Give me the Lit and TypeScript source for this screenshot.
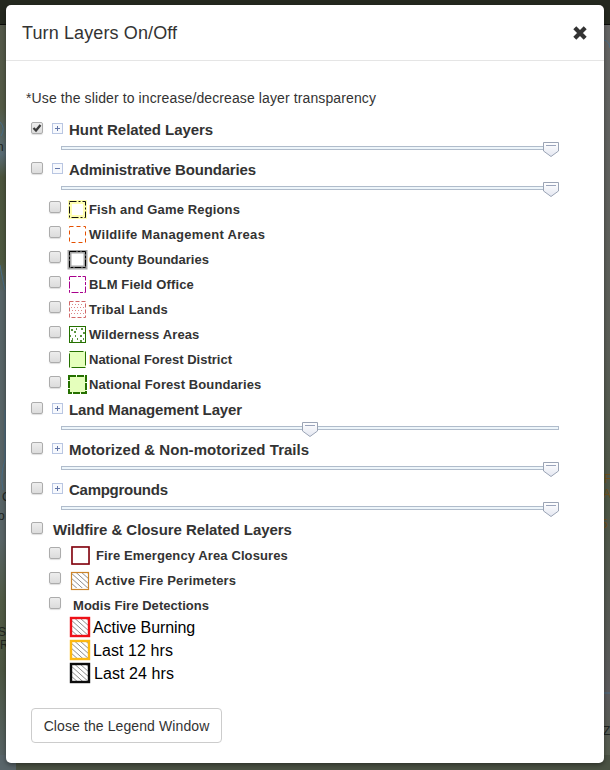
import { LitElement, html, css, svg, nothing } from "lit";
import { customElement, property } from "lit/decorators.js";
import { styleMap } from "lit/directives/style-map.js";

interface Item { label: string; art: string; gap?: number; ls?: number }
interface Group { label: string; checked?: boolean; open?: boolean; slider?: number; items?: Item[]; ls?: number }

const groups: Group[] = [
  { label: "Hunt Related Layers", checked: true, slider: 100, ls: -0.05 },
  {
    label: "Administrative Boundaries", open: true, slider: 100, ls: -0.16, items: [
      { label: "Fish and Game Regions", art: "fish", ls: 0.14 },
      { label: "Wildlife Management Areas", art: "wildlife", ls: 0.31 },
      { label: "County Boundaries", art: "county" },
      { label: "BLM Field Office", art: "blm", ls: 0.15 },
      { label: "Tribal Lands", art: "tribal", ls: 0.2 },
      { label: "Wilderness Areas", art: "wilderness", ls: 0.12 },
      { label: "National Forest District", art: "district" },
      { label: "National Forest Boundaries", art: "forest", ls: 0.1 },
    ],
  },
  { label: "Land Management Layer", slider: 50, ls: -0.14 },
  { label: "Motorized & Non-motorized Trails", slider: 100, ls: 0.03 },
  { label: "Campgrounds", slider: 100, ls: -0.27 },
];
const fire: Item[] = [
  { label: "Fire Emergency Area Closures", art: "closure", gap: 5, ls: 0.11 },
  { label: "Active Fire Perimeters", art: "perimeter", gap: 4, ls: 0.18 },
  { label: "Modis Fire Detections", art: "", ls: 0.05 },
];
const modis = [
  { label: "Active Burning", color: "#ee1118", gap: 2, ls: -0.07 },
  { label: "Last 12 hrs", color: "#fcb813", gap: 2, ls: 0.08 },
  { label: "Last 24 hrs", color: "#0c0c0c", gap: 3, ls: 0.08 },
];

const box = (stroke: string, dash: string, fill = "none", w = 1) =>
  svg`<rect x="2.5" y="1.5" width="16" height="16" fill=${fill} stroke=${stroke} stroke-width=${w} stroke-dasharray=${dash}/>`;
const hatch = (x: number, y: number, s: number) => svg`<svg x=${x} y=${y} width=${s} height=${s} viewBox="0 0 16 16">
  <path d="M-2-15L18 3M-2-10L18 8M-2-5L18 13M-2 0L18 18M-2 5L18 23M-2 10L18 28" stroke="#808080" stroke-width=".9"/></svg>`;

const art: Record<string, unknown> = {
  fish: svg`<rect x="1" y="0" width="19" height="19" fill="#ffffb0"/><rect x="5" y="4" width="11" height="11" fill="#fff"/>${box("#111", "7 2 2 2")}`,
  wildlife: box("#e55000", "4 3"),
  county: svg`<rect x="2.5" y="1.5" width="16" height="16" fill="#fff" stroke="#a5a5a5" stroke-width="4"/>${box("#000", "7 1 3 1")}`,
  blm: box("#a8008c", "7 1.5 3 1.5"),
  tribal: svg`${box("#d06868", "4 2")}<path d="M5 4.500H17M4 7.500H17M5 10.500H17M4 13.500H17" stroke="#d88" stroke-dasharray="1 2"/>`,
  wilderness: svg`${box("#257000", "none", "#fff")}<path d="M4 5h2M9 4h1M14 4h2M7 7h2M16 8h2M3 11h1M8 11h1M13 11h2M5 14h1M10 14h1M16 14h1M4 16h2M13 16h2" stroke="#257000" stroke-width="1.400"/>`,
  district: box("#257000", "14 2", "#e5ffbc"),
  forest: svg`<rect x="2" y="1" width="17" height="17" fill="#e5ffbc" stroke="#257000" stroke-width="2" stroke-dasharray="7 1"/>`,
  closure: svg`<rect x="4.5" y="1.500" width="18" height="18" fill="none" stroke="#f0d5d8" stroke-width="1"/><rect x="5" y="2" width="17" height="17" fill="#fff" stroke="#80000c" stroke-width="1.600"/>`,
  perimeter: svg`${hatch(5, 2, 16)}<rect x="4.5" y="2.500" width="17" height="17" fill="none" stroke="#cc852a" stroke-width="1.200"/>`,
};

@customElement("layer-checkbox")
export class LayerCheckbox extends LitElement {
  @property({ type: Boolean }) checked = false;
  static styles = css`
    :host { display: block; flex: none; width: 13px; height: 13px; }
    .box { box-sizing: border-box; width: 12px; height: 12px; border: 1px solid #acacac; border-radius: 2px;
      background: linear-gradient(#ededed, #dcdcdc); box-shadow: 0 1px 1px rgba(0, 0, 0, .13); }
    svg { display: block; margin: -1px 0 0 -1px; overflow: visible; }
  `;
  render() {
    return html`<div class="box">${this.checked ? html`<svg width="12" height="12"><path d="M2.500 6L5 8.500L9.500 3" fill="none" stroke="#3a3a3a" stroke-width="2.300"/></svg>` : nothing}</div>`;
  }
}

@customElement("layer-slider")
export class LayerSlider extends LitElement {
  @property({ type: Number }) value = 100;
  static styles = css`
    :host { display: flex; align-items: center; height: 20px; margin-left: 30px; width: 498px; }
    .track { position: relative; box-sizing: border-box; width: 498px; height: 4px; margin-top: -4px;
      border: 1px solid #b0bccb; background: #edf5fa; }
    svg { position: absolute; top: -5px; }
  `;
  render() {
    return html`<div class="track"><svg style=${styleMap({ left: `${240 + (this.value - 50) * 4.82}px` })} width="16" height="15">
      <defs><linearGradient id="g" x2="0" y2="1"><stop stop-color="#fff"/><stop offset="1" stop-color="#e4e7f1"/></linearGradient></defs>
      <path d="M.5.5H15.5V9L8 14.5L.5 9Z" fill="url(#g)" stroke="#9ba4b5"/><path d="M3 3.5H13" stroke="#9aa4bb"/></svg></div>`;
  }
}

@customElement("app-root")
export class AppRoot extends LitElement {
  static styles = css`
    :host { display: block; position: relative; width: 610px; height: 770px; overflow: hidden; box-sizing: border-box;
      padding: 5px 6px 7px; background: #484e43; color: #333; font: 14px/20px "Liberation Sans", Arial, sans-serif; }
    .map { position: absolute; inset: 0; }
    .dialog { position: relative; box-sizing: border-box; width: 598px; height: 758px; background: #fff; border-radius: 5px;
      box-shadow: 0 2px 5px rgba(0, 0, 0, .4); }
    header { display: flex; justify-content: space-between; align-items: center; height: 55px; box-sizing: content-box;
      border-bottom: 1px solid #e5e5e5; padding: 0 17px 0 16px; }
    h1 { margin: 0; font-size: 18px; font-weight: 400; letter-spacing: .12px; }
    .content { padding: 27px 0 0 25px; }
    .note { margin: 0 0 12px -5px; letter-spacing: .11px; }
    .head { display: flex; height: 20px; font-size: 15px; font-weight: 700; white-space: nowrap; }
    .head layer-checkbox { margin-top: 2px; }
    .toggle { margin: 3px 6px 0 8px; flex: none; }
    .fire-head { height: 25px; letter-spacing: -.06px; }
    .fire-head .label { margin-left: 9px; }
    .item { display: flex; height: 25px; padding-left: 18px; font-size: 13px; font-weight: 700; white-space: nowrap; }
    .item layer-checkbox { margin-top: 1px; }
    .fire layer-checkbox { margin-top: 2px; }
    .fire .label { padding-top: 1px; }
    .art { flex: none; margin-left: 5px; }
    .blank { width: 11px; }
    .legend { display: flex; align-items: center; height: 23px; padding-left: 38px; font-size: 16px; color: #000; }
    .legend span { padding-top: 2px; }
    .legends { margin-top: -5px; }
    button { display: block; margin-top: 24px; width: 191px; height: 35px; padding: 0; background: #fff; border: 1px solid #ccc;
      border-radius: 4px; font: inherit; letter-spacing: .1px; color: #333; }
  `;
  item(i: Item) {
    return html`<div class="item"><layer-checkbox></layer-checkbox>${i.art
      ? html`<svg class="art" width=${i.gap ? 24 : 22} height="22">${art[i.art]}</svg>` : html`<span class="blank"></span>`}
      <span class="label" style=${styleMap({ marginLeft: `${i.gap ?? 0}px`, letterSpacing: `${i.ls ?? 0}px` })}>${i.label}</span></div>`;
  }
  group(g: Group) {
    return html`<div class="head"><layer-checkbox ?checked=${g.checked}></layer-checkbox>
      <svg class="toggle" width="11" height="11"><rect x=".5" y=".5" width="10" height="10" fill="#f7f9fd" stroke="#b9c6e2"/>
        <path d=${g.open ? "M3 5.5H8" : "M3 5.5H8M5.5 3V8"} stroke="#6377a9"/></svg>
      <span class="label" style=${styleMap({ letterSpacing: `${g.ls ?? 0}px` })}>${g.label}</span></div>
      <layer-slider .value=${g.slider ?? 100}></layer-slider>
      ${g.items?.map((i) => this.item(i))}`;
  }
  render() {
    return html`
      <svg class="map" width="610" height="770">
        <defs>
          <linearGradient id="l" x2="0" y2="1"><stop stop-color="#54584b"/><stop offset=".14" stop-color="#545b46"/><stop offset=".2" stop-color="#596c75"/><stop offset=".23" stop-color="#4c553d"/><stop offset=".34" stop-color="#4e5940"/><stop offset=".38" stop-color="#576467"/><stop offset=".7" stop-color="#596567"/><stop offset=".78" stop-color="#515b45"/><stop offset=".87" stop-color="#4c5642"/><stop offset="1" stop-color="#59656a"/></linearGradient>
          <linearGradient id="r" x2="0" y2="1"><stop stop-color="#666"/><stop offset=".45" stop-color="#5b5e57"/><stop offset=".65" stop-color="#4d5746"/><stop offset=".9" stop-color="#5c5b5d"/><stop offset="1" stop-color="#555e4b"/></linearGradient>
        </defs>
        <rect width="300" height="770" fill="url(#l)"/><rect x="300" width="310" height="770" fill="url(#r)"/>
        <rect y="755" width="610" height="15" fill="#4b5244"/><rect y="755" width="16" height="15" fill="#59656a"/>
        <rect width="610" height="24" fill="#25291f"/><path d="M0 24.500H610" stroke="#090a08"/>
        <path d="M0 122Q6 128 1 136M0 265Q3 282 5 290M5 410V460Q0 475 3 490M604 40Q610 42 610 48M604 693H610" stroke="#496f88" fill="none"/>
        <g font-family="Liberation Sans" font-size="12" fill="#20241f"><text x="-3" y="151">n</text><text x="2" y="501">C</text><text x="-2" y="520">o</text><text x="-2" y="636">S</text><text x="0" y="649">R</text><text x="603" y="735">Z</text></g>
        <g font-family="Liberation Sans" font-size="12" fill="#70501c"><text x="604" y="483">F</text><text x="603" y="498">A</text><text x="601" y="528">5</text></g>
      </svg>
      <section class="dialog">
        <header><h1>Turn Layers On/Off</h1>
          <svg width="14" height="14"><path d="M1.800 1.800L12.200 12.200M12.200 1.800L1.800 12.200" stroke="#333" stroke-width="4.200"/></svg></header>
        <div class="content">
          <p class="note">*Use the slider to increase/decrease layer transparency</p>
          ${groups.map((g) => this.group(g))}
          <div class="head fire-head"><layer-checkbox></layer-checkbox><span class="label">Wildfire &amp; Closure Related Layers</span></div>
          <div class="fire">${fire.map((i) => this.item(i))}</div>
          <div class="legends">${modis.map((m) => html`<div class="legend"><svg width="22" height="22">${hatch(3, 3, 16)}<rect x="2" y="2" width="18" height="18" fill="none" stroke=${m.color} stroke-width="2.400"/></svg>
            <span style=${styleMap({ marginLeft: `${m.gap}px`, letterSpacing: `${m.ls}px` })}>${m.label}</span></div>`)}</div>
          <button>Close the Legend Window</button>
        </div>
      </section>`;
  }
}
